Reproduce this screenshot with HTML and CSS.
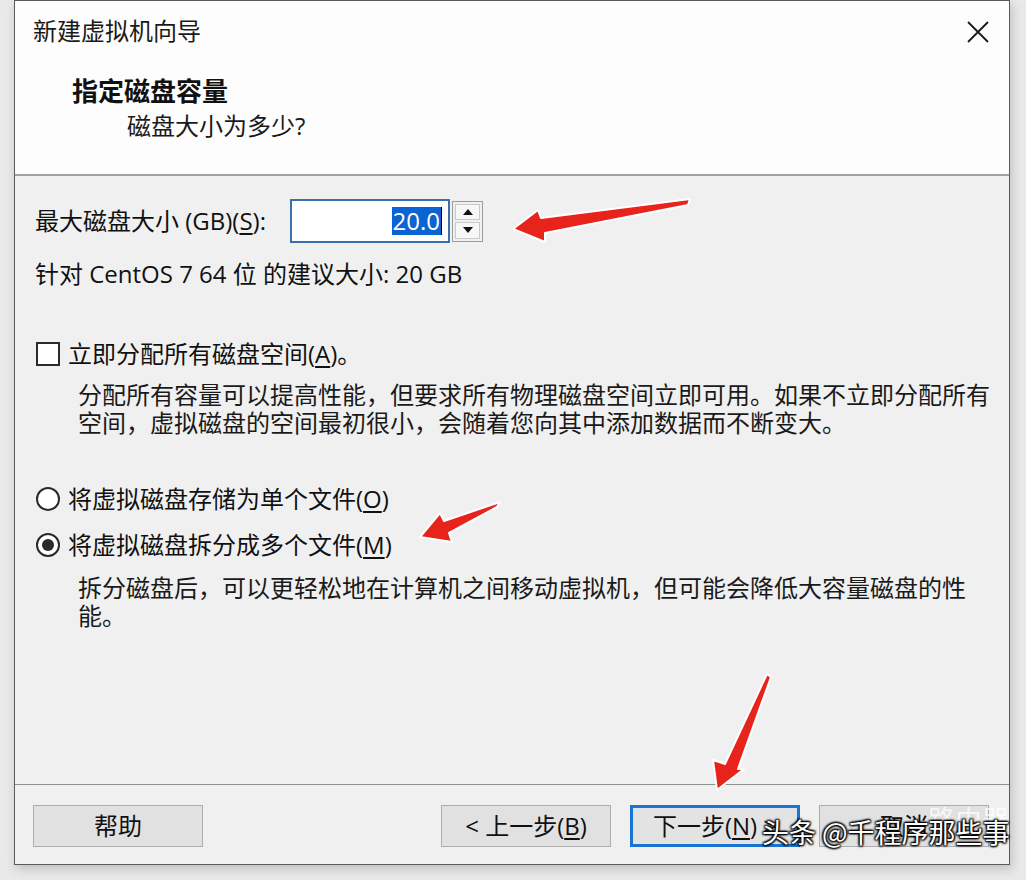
FILE: index.html
```html
<!DOCTYPE html>
<html lang="zh-CN">
<head>
<meta charset="utf-8">
<title>新建虚拟机向导</title>
<link rel="stylesheet" href="styles.css">
</head>
<body>
<div class="window">
  <div class="header">
    <div class="titlebar">
      <span class="title">新建虚拟机向导</span>
      <svg class="close" width="24" height="24" viewBox="0 0 24 24"><path d="M2 2 L22 22 M22 2 L2 22" stroke="#1a1a1a" stroke-width="1.8" fill="none"/></svg>
    </div>
    <div class="h-main">指定磁盘容量</div>
    <div class="h-sub">磁盘大小为多少?</div>
  </div>
  <div class="content">
    <div class="spin-row">
      <span class="label">最大磁盘大小 (GB)(<u>S</u>):</span>
      <div class="spin-input"><span class="sel">20.0</span><span class="caret"></span></div>
      <div class="spin-btns">
        <div class="spin-btn"><svg width="12" height="8" viewBox="0 0 12 8"><path d="M1 7 L6 1 L11 7 Z" fill="#111"/></svg></div>
        <div class="spin-btn"><svg width="12" height="8" viewBox="0 0 12 8"><path d="M1 1 L11 1 L6 7 Z" fill="#111"/></svg></div>
      </div>
    </div>
    <div class="rec">针对 CentOS 7 64 位 的建议大小: 20 GB</div>
    <div class="opt opt-check"><span class="checkbox"></span><span>立即分配所有磁盘空间(<u>A</u>)。</span></div>
    <div class="desc">分配所有容量可以提高性能，但要求所有物理磁盘空间立即可用。如果不立即分配所有<br>空间，虚拟磁盘的空间最初很小，会随着您向其中添加数据而不断变大。</div>
    <div class="opt opt-radio1"><span class="radio"></span><span>将虚拟磁盘存储为单个文件(<u>O</u>)</span></div>
    <div class="opt opt-radio2"><span class="radio checked"></span><span>将虚拟磁盘拆分成多个文件(<u>M</u>)</span></div>
    <div class="desc desc2">拆分磁盘后，可以更轻松地在计算机之间移动虚拟机，但可能会降低大容量磁盘的性<br>能。</div>
  </div>
  <div class="footer">
    <button class="btn">帮助</button>
    <div class="btn-group">
      <button class="btn">&lt; 上一步(<u>B</u>)</button>
      <button class="btn btn-primary">下一步(<u>N</u>) &gt;</button>
      <button class="btn">取消</button>
    </div>
  </div>
</div>
<svg class="arrows" width="1026" height="880" viewBox="0 0 1026 880">
  <g fill="#e8231b" stroke="#ffffff" stroke-width="2" stroke-linejoin="round">
    <path d="M513 229 L538 210 L541 218 L690 199 L688 205 L545 233 L545 242 Z"/>
    <path d="M420 537 L440 513 L444 521 L500 502 L497 507 L449 533 L452 542 Z"/>
    <path d="M717 790 L713 760 L725 764 L767 674 L771 677 L738 769 L744 769 Z"/>
  </g>
</svg>
<div class="wm-faint">路由器</div>
<div class="watermark">头条 @千程序那些事</div>
</body>
</html>
```
FILE: styles.css
```css
html, body {
  margin: 0;
  padding: 0;
}
body {
  width: 1026px;
  height: 880px;
  background: #e9e9e9;
  position: relative;
  overflow: hidden;
  font-family: "Open Sans", "Noto Sans CJK SC", sans-serif;
  color: #111;
}
u { text-decoration: underline; text-underline-offset: 3px; text-decoration-thickness: 1.5px; }

.window {
  box-sizing: border-box;
  margin-left: 14px;
  width: 996px;
  height: 865px;
  border: 1px solid #5a5a5a;
  background: #f0f0f0;
  display: flex;
  flex-direction: column;
  box-shadow: 2px 4px 10px rgba(0,0,0,0.18);
}

.header {
  height: 173px;
  flex: none;
  background: #fdfdfd;
  border-bottom: 2px solid #a3a3a3;
}
.titlebar {
  display: flex;
  justify-content: space-between;
  align-items: center;
  padding: 14px 19px 0 18px;
  height: 32px;
}
.title {
  font-size: 24px;
  line-height: 30px;
  color: #1a1a1a;
}
.close { display: block; margin-top: 2px; }
.h-main {
  margin-top: 28px;
  padding-left: 57px;
  font-size: 26px;
  font-weight: 700;
  line-height: 32px;
}
.h-sub {
  margin-top: 5px;
  padding-left: 112px;
  font-size: 24px;
  line-height: 28px;
  color: #1a1a1a;
}

.content {
  height: 608px;
  flex: none;
  padding-left: 20px;
  font-size: 24px;
  line-height: 28px;
}
.spin-row {
  margin-top: 23px;
  height: 44px;
  display: flex;
  align-items: center;
}
.label { width: 255px; flex: none; white-space: nowrap; }
.spin-input {
  box-sizing: border-box;
  width: 160px;
  height: 44px;
  border: 2px solid #3d6eb0;
  background: #fff;
  display: flex;
  justify-content: flex-end;
  align-items: center;
  padding-right: 6px;
}
.sel {
  background: #0a64d2;
  color: #fff;
  line-height: 28px;
  padding: 0 1px;
}
.caret {
  width: 1px;
  height: 28px;
  background: #000;
}
.spin-btns {
  box-sizing: border-box;
  margin-left: 2px;
  width: 31px;
  height: 41px;
  border: 1px solid #9b9b9b;
  background: #f0f0f0;
  display: flex;
  flex-direction: column;
  padding: 2px;
  gap: 2px;
}
.spin-btn {
  flex: 1;
  border: 1px solid #c9c9c9;
  background: #f7f7f7;
  display: flex;
  align-items: center;
  justify-content: center;
}
.spin-btn svg { display: block; }

.rec { margin-top: 17px; }

.opt {
  display: flex;
  align-items: center;
  gap: 8px;
  padding-left: 1px;
}
.opt-check { margin-top: 52px; }
.opt-radio1 { margin-top: 48px; }
.opt-radio2 { margin-top: 18px; }
.checkbox {
  box-sizing: border-box;
  width: 24px;
  height: 24px;
  border: 2px solid #2a2a2a;
  background: #fff;
  flex: none;
}
.radio {
  box-sizing: border-box;
  width: 24px;
  height: 24px;
  border: 2px solid #2a2a2a;
  border-radius: 50%;
  background: #fff;
  flex: none;
  display: flex;
  align-items: center;
  justify-content: center;
}
.radio.checked::after {
  content: "";
  width: 12px;
  height: 12px;
  border-radius: 50%;
  background: #2a2a2a;
}
.desc {
  margin-top: 13px;
  padding-left: 43px;
  color: #1a1a1a;
  white-space: nowrap;
}
.desc2 { margin-top: 15px; }

.footer {
  height: 79px;
  flex: none;
  border-top: 1px solid #8f8f8f;
  display: flex;
  align-items: flex-start;
  justify-content: space-between;
  padding: 20px 20px 0 18px;
}
.btn-group {
  display: flex;
  gap: 19px;
}
.btn {
  box-sizing: border-box;
  width: 170px;
  height: 42px;
  border: 1px solid #adadad;
  background: #e1e1e1;
  font-family: "Open Sans", "Noto Sans CJK SC", sans-serif;
  font-size: 24px;
  color: #111;
  padding: 0;
  line-height: 40px;
}
.btn-primary {
  border: 3px solid #1a74d4;
  background: #e3e3e3;
  line-height: 36px;
}

.arrows {
  position: absolute;
  left: 0;
  top: 0;
  pointer-events: none;
}
.watermark {
  position: absolute;
  left: 762px;
  top: 814px;
  font-family: "Noto Sans CJK SC", sans-serif;
  font-size: 27px;
  line-height: 36px;
  color: #fff;
  text-shadow: 0 0 2px #000, 1px 1px 2px #000, -1px -1px 2px #000, 1px -1px 2px #000, -1px 1px 2px #000;
}
.wm-faint {
  position: absolute;
  left: 928px;
  top: 804px;
  font-family: "Noto Sans CJK SC", sans-serif;
  font-size: 27px;
  line-height: 30px;
  color: rgba(255,255,255,0.75);
}
```
